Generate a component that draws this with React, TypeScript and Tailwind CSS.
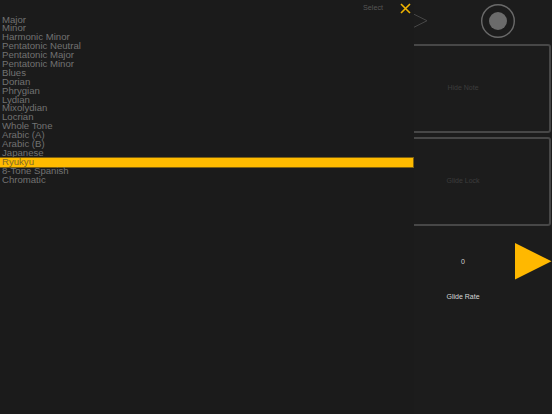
import React from "react";

const scales = [
  "Major",
  "Minor",
  "Harmonic Minor",
  "Pentatonic Neutral",
  "Pentatonic Major",
  "Pentatonic Minor",
  "Blues",
  "Dorian",
  "Phrygian",
  "Lydian",
  "Mixolydian",
  "Locrian",
  "Whole Tone",
  "Arabic (A)",
  "Arabic (B)",
  "Japanese",
  "Ryukyu",
  "8-Tone Spanish",
  "Chromatic",
];

export default function App() {
  const selected = "Ryukyu";
  return (
    <div
      className="relative w-[552px] h-[414px] overflow-hidden bg-[#1c1c1c] flex justify-end"
      style={{ fontFamily: '"Liberation Sans", Arial, sans-serif' }}
    >
      {/* Right column (partially covered by the picker) */}
      <div className="w-[177px] flex flex-col">
        <div className="h-[44px] flex items-start">
          <svg className="ml-[38px] mt-[13px]" width="15" height="16" viewBox="0 0 15 16">
            <polyline points="0.5,1 14,7.7 0.5,14.5" fill="none" stroke="#474747" strokeWidth="1" />
          </svg>
          <svg className="ml-[52px] mt-[3px]" width="36" height="36" viewBox="0 0 36 36">
            <circle cx="18" cy="18" r="16.3" fill="none" stroke="#6a6a6a" strokeWidth="1.4" />
            <circle cx="18" cy="18" r="9" fill="#6b6b6b" />
          </svg>
        </div>
        <div className="w-[176px] h-[89px] border-2 border-[#474747] rounded-[3px] flex items-center justify-center">
          <span className="text-[7px] text-[#3c3c3c]">Hide Note</span>
        </div>
        <div className="w-[176px] h-[89px] mt-[4px] border-2 border-[#474747] rounded-[3px] flex items-center justify-center">
          <span className="text-[7px] text-[#3c3c3c]">Glide Lock</span>
        </div>
        <div className="relative w-[176px] h-[90px]">
          <div className="flex flex-col items-center pt-[32px]">
            <span className="text-[7px] leading-[8px] text-[#cfcfcf]">0</span>
            <span className="mt-[27px] text-[7px] leading-[8px] text-[#d6d6d6]">Glide Rate</span>
          </div>
          <svg className="absolute left-[140px] top-[17px]" width="37" height="37" viewBox="0 0 37 37">
            <polygon points="0,0 36.5,18.3 0,36.5" fill="#ffb800" />
          </svg>
        </div>
      </div>

      {/* Scale picker overlay */}
      <div className="absolute left-0 top-0 w-[414px] h-full bg-[#1b1b1b]">
        <div className="relative h-[15.5px]">
          <span className="absolute left-[363px] top-[4px] text-[7.2px] leading-[8px] text-[#575757]">
            Select
          </span>
          <svg className="absolute left-[400px] top-[3px]" width="11" height="11" viewBox="0 0 11 11">
            <path d="M1 1 L10 10 M10 1 L1 10" stroke="#f0b400" strokeWidth="1.6" fill="none" />
          </svg>
        </div>
        <div className="flex flex-col">
          {scales.map((s) =>
            s === selected ? (
              <div
                key={s}
                className="h-[8.9px] w-[413px] bg-[#ffbb00] ring-1 ring-[#7d6010] text-[9.6px] leading-[8.9px] pl-[2px] text-[#806a2a] whitespace-nowrap"
              >
                {s}
              </div>
            ) : (
              <div
                key={s}
                className="h-[8.9px] text-[9.6px] leading-[8.9px] pl-[2px] text-[#727272] whitespace-nowrap"
              >
                {s}
              </div>
            )
          )}
        </div>
      </div>
    </div>
  );
}
